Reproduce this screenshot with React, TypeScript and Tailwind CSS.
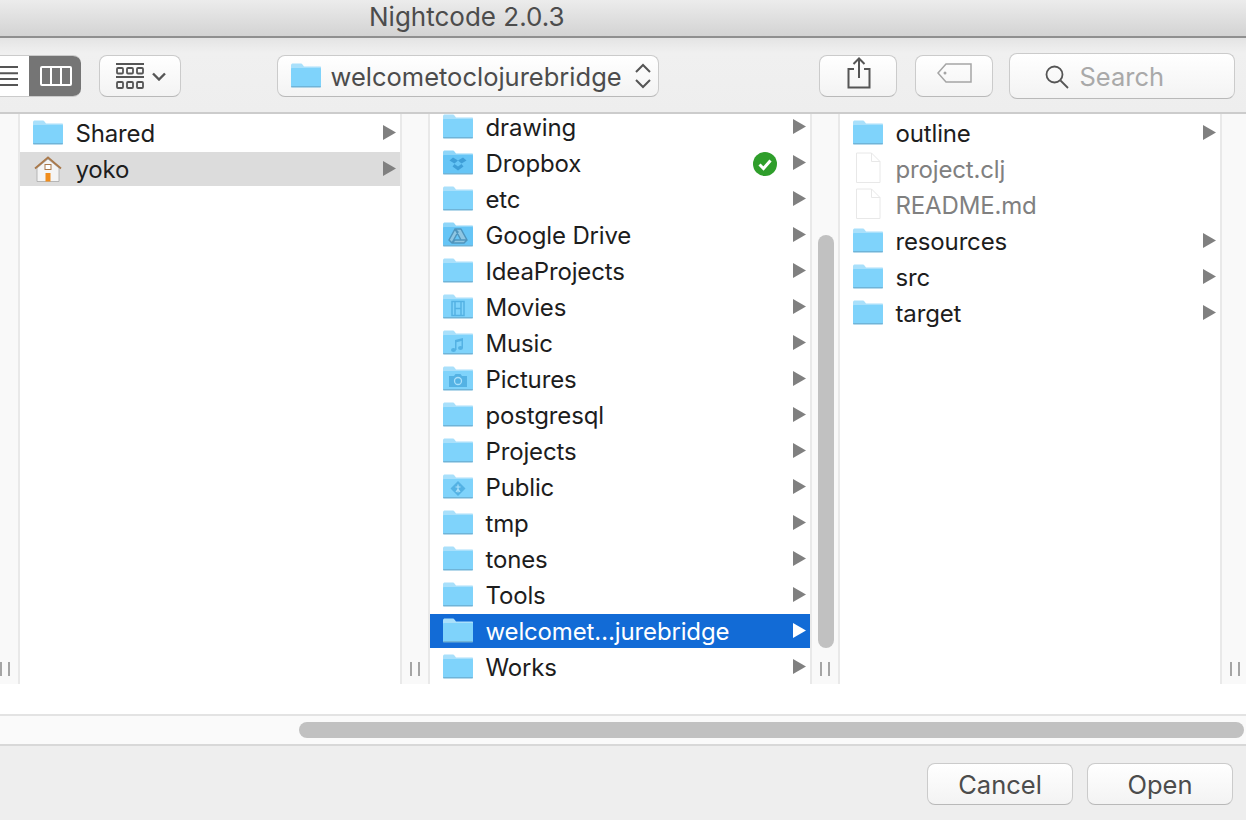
type FolderKind = 'plain' | 'dropbox' | 'drive' | 'movies' | 'music' | 'pictures' | 'public'

type Entry = { name: string; icon: FolderKind | 'home' | 'file'; leaf?: boolean; active?: 'gray' | 'blue'; synced?: boolean }

const col1: Entry[] = [
  { name: 'Shared', icon: 'plain' },
  { name: 'yoko', icon: 'home', active: 'gray' },
]

const col2: Entry[] = [
  { name: 'drawing', icon: 'plain' },
  { name: 'Dropbox', icon: 'dropbox', synced: true },
  { name: 'etc', icon: 'plain' },
  { name: 'Google Drive', icon: 'drive' },
  { name: 'IdeaProjects', icon: 'plain' },
  { name: 'Movies', icon: 'movies' },
  { name: 'Music', icon: 'music' },
  { name: 'Pictures', icon: 'pictures' },
  { name: 'postgresql', icon: 'plain' },
  { name: 'Projects', icon: 'plain' },
  { name: 'Public', icon: 'public' },
  { name: 'tmp', icon: 'plain' },
  { name: 'tones', icon: 'plain' },
  { name: 'Tools', icon: 'plain' },
  { name: 'welcomet…jurebridge', icon: 'plain', active: 'blue' },
  { name: 'Works', icon: 'plain' },
]

const col3: Entry[] = [
  { name: 'outline', icon: 'plain' },
  { name: 'project.clj', icon: 'file', leaf: true },
  { name: 'README.md', icon: 'file', leaf: true },
  { name: 'resources', icon: 'plain' },
  { name: 'src', icon: 'plain' },
  { name: 'target', icon: 'plain' },
]

function Folder({ kind = 'plain' }: { kind?: FolderKind }) {
  const mark = '#54b2e4'
  const deep = kind === 'dropbox' || kind === 'drive'
  return (
    <svg width="32" height="26" viewBox="0 0 32 26" className="-mt-[2px] shrink-0">
      <path d="M1 3.500C1 2 1.800 1.500 3 1.500h7.500c1 0 1.600.4 2.200 1.200L14 4.500h16c.7 0 1 .4 1 1V24c0 .7-.4 1-1 1H2c-.7 0-1-.4-1-1z" fill={deep ? '#8fd6f9' : '#a9e0fb'} />
      <rect x="1" y="6" width="30" height="18.500" rx="1" fill={deep ? '#66c5f6' : '#7fd3fb'} />
      <rect x="1" y="24" width="30" height="1.500" rx="0.700" fill="#6fb4d8" />
      {kind === 'dropbox' && (
        <path d="M11 8.500l5 3-3.500 3-5-3zM21 8.500l-5 3 3.500 3 5-3zM10.500 17.500l2-2.500 3.500 2.500 3.500-2.500 2 2.500-5.500 4z" fill="#3f9fd8" />
      )}
      {kind === 'drive' && (
        <g fill="#8fc6e2" stroke="#4f95bd" strokeWidth="1.500" strokeLinejoin="round">
          <path d="M13 8h6l6 11h-6zM13 8L7 19l3 3 6-11zM10 22h12l3-3H13z" />
        </g>
      )}
      {kind === 'movies' && (
        <g fill="none" stroke={mark} strokeWidth="1.500">
          <rect x="10" y="8.500" width="12" height="14" />
          <path d="M13 8.500v14M19 8.500v14M13 15.500h6" />
        </g>
      )}
      {kind === 'music' && (
        <g fill={mark}>
          <path d="M13 11l8-2v10h-1.500v-7l-5 1.200V21H13z" />
          <ellipse cx="11.500" cy="21" rx="2.500" ry="2" />
          <ellipse cx="18.500" cy="19" rx="2.500" ry="2" />
        </g>
      )}
      {kind === 'pictures' && (
        <g>
          <path d="M7 11h5l1.500-2h5l1.500 2h5v11H7z" fill={mark} />
          <circle cx="16" cy="16" r="3.500" fill="none" stroke="#a9e0fb" strokeWidth="1.300" />
        </g>
      )}
      {kind === 'public' && (
        <g>
          <path d="M16 8l7.500 7.500L16 23l-7.500-7.500z" fill={mark} />
          <path d="M16 11.500v8M13.500 14h5M16 16l-2 3M16 16l2 3" stroke="#a9e0fb" strokeWidth="1.200" fill="none" />
        </g>
      )}
    </svg>
  )
}

function HomeIcon() {
  return (
    <svg width="32" height="28" viewBox="0 0 32 28" className="shrink-0">
      <path d="M5 13L16 4l11 9v13.500H5z" fill="#f4f4f4" stroke="#a8a8a8" strokeWidth="0.800" />
      <path d="M3 13.500L16 2.500l13 11" fill="none" stroke="#a9784a" strokeWidth="1.800" />
      <rect x="13" y="9.500" width="6" height="5" fill="#fff" stroke="#a9784a" strokeWidth="1" />
      <rect x="13.500" y="18" width="5" height="8.500" fill="#f08c1a" />
    </svg>
  )
}

function FileIcon() {
  return (
    <svg width="32" height="32" viewBox="0 0 32 32" className="-mt-[2px] shrink-0">
      <path d="M4.500 1h15L28 9.500V30.500H4.500z" fill="#fff" stroke="#e8e8e8" strokeWidth="1" />
      <path d="M19.500 1v8.500H28" fill="none" stroke="#e8e8e8" strokeWidth="1" />
    </svg>
  )
}

function SyncBadge() {
  return (
    <svg width="24" height="24" viewBox="0 0 24 24" className="mt-[2px] mr-[16px] shrink-0">
      <circle cx="12" cy="12" r="12" fill="#2f9e2b" />
      <path d="M6.500 12.500l4 4 7-8" fill="none" stroke="#fff" strokeWidth="3" />
    </svg>
  )
}

function Row({ entry }: { entry: Entry }) {
  const bg = entry.active === 'blue' ? 'bg-[#126bd6]' : entry.active === 'gray' ? 'bg-[#dcdcdc]' : ''
  const text = entry.active === 'blue' ? 'text-white' : entry.leaf ? 'text-[#808080]' : 'text-[#1d1d1d]'
  return (
    <div className="flex h-[36px] items-center py-px">
      <div className={`flex h-[34px] w-full items-center ${bg}`}>
        <div className="flex w-[55.500px] shrink-0 justify-start pl-[12px]">
          {entry.icon === 'home' ? <HomeIcon /> : entry.icon === 'file' ? <FileIcon /> : <Folder kind={entry.icon} />}
        </div>
        <span className={`mt-[2px] flex-1 text-[24px] leading-[32px] tracking-[-0.15px] ${text}`}>{entry.name}</span>
        {entry.synced && <SyncBadge />}
        {!entry.leaf && (
          <svg width="13" height="15" viewBox="0 0 13 15" className="-mt-[2px] mr-[4px] shrink-0">
            <path d="M0 0l13 7.500-13 7.500z" fill={entry.active === 'blue' ? '#fff' : '#808080'} />
          </svg>
        )}
      </div>
    </div>
  )
}

function Grips() {
  return (
    <div className="mt-auto mb-[8px] flex gap-[6px] pl-[8px]">
      <div className="h-[14px] w-[2px] bg-[#a5a5a5]" />
      <div className="h-[14px] w-[2px] bg-[#a5a5a5]" />
    </div>
  )
}

function Gutter({ thumb }: { thumb?: boolean }) {
  return (
    <div className="flex w-[30px] shrink-0 flex-col border-x-2 border-[#e9e9e9] bg-[#f9f9f9]">
      {thumb && <div className="mt-[121px] ml-[6px] h-[413px] w-[16px] rounded-full bg-[#c1c1c1]" />}
      <Grips />
    </div>
  )
}

function Column({ entries, className = '' }: { entries: Entry[]; className?: string }) {
  return (
    <div className="h-full w-[380px] shrink-0 overflow-hidden bg-white">
      <div className={className}>
        {entries.map((e) => (
          <Row key={e.name} entry={e} />
        ))}
      </div>
    </div>
  )
}

const btn =
  'flex h-[42px] shrink-0 items-center justify-center rounded-[8px] border border-[#cbcbcb] border-b-[#b9b9b9] bg-gradient-to-b from-white to-[#f3f3f3]'

export default function App() {
  return (
    <div className="flex h-[820px] w-[1246px] flex-col overflow-hidden bg-[#eeeeee] font-['Inter',sans-serif]">
      <div className="flex h-[38px] shrink-0 items-center border-b-2 border-[#8f8f8f] bg-gradient-to-b from-[#ececec] to-[#d3d3d3] pb-[4px] pl-[369px] text-[26px] text-[#4c4c4c]">
        Nightcode 2.0.3
      </div>

      <div className="flex h-[76px] shrink-0 items-center border-b-2 border-[#cccccc] bg-gradient-to-b from-[#e4e4e4] via-[#f0f0f0] via-20% to-[#eeeeee] pt-[2px]">
        <div className="-ml-[20px] flex h-[42px] w-[101px] shrink-0 overflow-hidden rounded-[8px] border border-r-0 border-[#cbcbcb] bg-white">
          <div className="flex flex-1 items-center justify-end pr-[11px]">
            <svg width="18" height="20" viewBox="0 0 18 20">
              <path d="M0 1h18M0 7.300h18M0 13h18M0 19h18" stroke="#555" strokeWidth="2" />
            </svg>
          </div>
          <div className="flex w-[52px] items-center justify-center bg-[#757575] pl-[2px]">
            <svg width="32" height="20" viewBox="0 0 32 20">
              <rect x="1" y="1" width="30" height="18" rx="1" fill="none" stroke="#fff" strokeWidth="2" />
              <path d="M11 1v18M21 1v18" stroke="#fff" strokeWidth="2" />
            </svg>
          </div>
        </div>

        <div className={`${btn} ml-[18px] w-[82px] gap-[8px] pl-[2px]`}>
          <svg width="28" height="26" viewBox="0 0 28 26">
            <path d="M0 1h28M0 14h28" stroke="#555" strokeWidth="1.800" />
            <g fill="none" stroke="#555" strokeWidth="1.800">
              <rect x="1" y="5" width="6" height="5.500" rx="1" />
              <rect x="11" y="5" width="6" height="5.500" rx="1" />
              <rect x="21" y="5" width="6" height="5.500" rx="1" />
              <rect x="1" y="19" width="6" height="6" rx="1" />
              <rect x="11" y="19" width="6" height="6" rx="1" />
              <rect x="21" y="19" width="6" height="6" rx="1" />
            </g>
          </svg>
          <svg width="14" height="9" viewBox="0 0 14 9">
            <path d="M1 1.500l6 6 6-6" fill="none" stroke="#555" strokeWidth="2.400" />
          </svg>
        </div>

        <div className={`${btn} ml-[96px] w-[382px] justify-start pl-[12px]`}>
          <Folder />
          <span className="mt-[2px] ml-[8.500px] flex-1 text-[25.500px] text-[#4c4c4c]">welcometoclojurebridge</span>
          <svg width="16" height="26" viewBox="0 0 16 26" className="mr-[7px]">
            <path d="M1 9l7-7 7 7M1 17l7 7 7-7" fill="none" stroke="#555" strokeWidth="2" />
          </svg>
        </div>

        <div className={`${btn} ml-[160px] w-[78px] pl-[2px]`}>
          <svg width="24" height="32" viewBox="0 0 24 32" className="-mt-[6px]">
            <path d="M7 12H1.500v18.500h21V12H17" fill="none" stroke="#555" strokeWidth="2" />
            <path d="M12 21V2M6.500 7L12 1.500 17.500 7" fill="none" stroke="#555" strokeWidth="2" />
          </svg>
        </div>

        <div className={`${btn} ml-[18px] w-[78px] pl-[2px]`}>
          <svg width="36" height="20" viewBox="0 0 36 20" className="-mt-[6px]">
            <path d="M1 10l8-9h25v18H9z" fill="none" stroke="#a5a5a5" strokeWidth="1.500" />
            <circle cx="8" cy="10" r="1.500" fill="#a5a5a5" />
          </svg>
        </div>

        <div className={`${btn} ml-[16px] h-[46px] w-[226px] justify-start pl-[35px]`}>
          <svg width="24" height="24" viewBox="0 0 24 24" className="mt-[2px]">
            <circle cx="9.500" cy="9.500" r="8" fill="none" stroke="#555" strokeWidth="1.800" />
            <path d="M15.500 15.500L23 23" stroke="#555" strokeWidth="1.800" />
          </svg>
          <span className="mt-[2px] ml-[10.500px] text-[25.500px] text-[#a9a9a9]">Search</span>
        </div>
      </div>

      <div className="flex h-[570px] shrink-0">
        <div className="-ml-[10px] flex">
          <Gutter />
        </div>
        <Column entries={col1} className="pt-px" />
        <Gutter />
        <Column entries={col2} className="-mt-[5px]" />
        <Gutter thumb />
        <Column entries={col3} className="pt-px" />
        <Gutter />
      </div>

      <div className="h-[30px] shrink-0 bg-white" />

      <div className="h-[32px] shrink-0 border-y-2 border-t-[#e3e3e3] border-b-[#d8d8d8] bg-[#fafafa] pt-[6px] pl-[299px]">
        <div className="h-[16px] w-[945px] rounded-full bg-[#c1c1c1]" />
      </div>

      <div className="flex flex-1 items-start justify-end gap-[14px] pt-[17px] pr-[13px]">
        <div className={`${btn} w-[146px] pt-[2px] text-[25.500px] text-[#4c4c4c]`}>Cancel</div>
        <div className={`${btn} w-[146px] pt-[2px] text-[25.500px] text-[#4c4c4c]`}>Open</div>
      </div>
    </div>
  )
}
